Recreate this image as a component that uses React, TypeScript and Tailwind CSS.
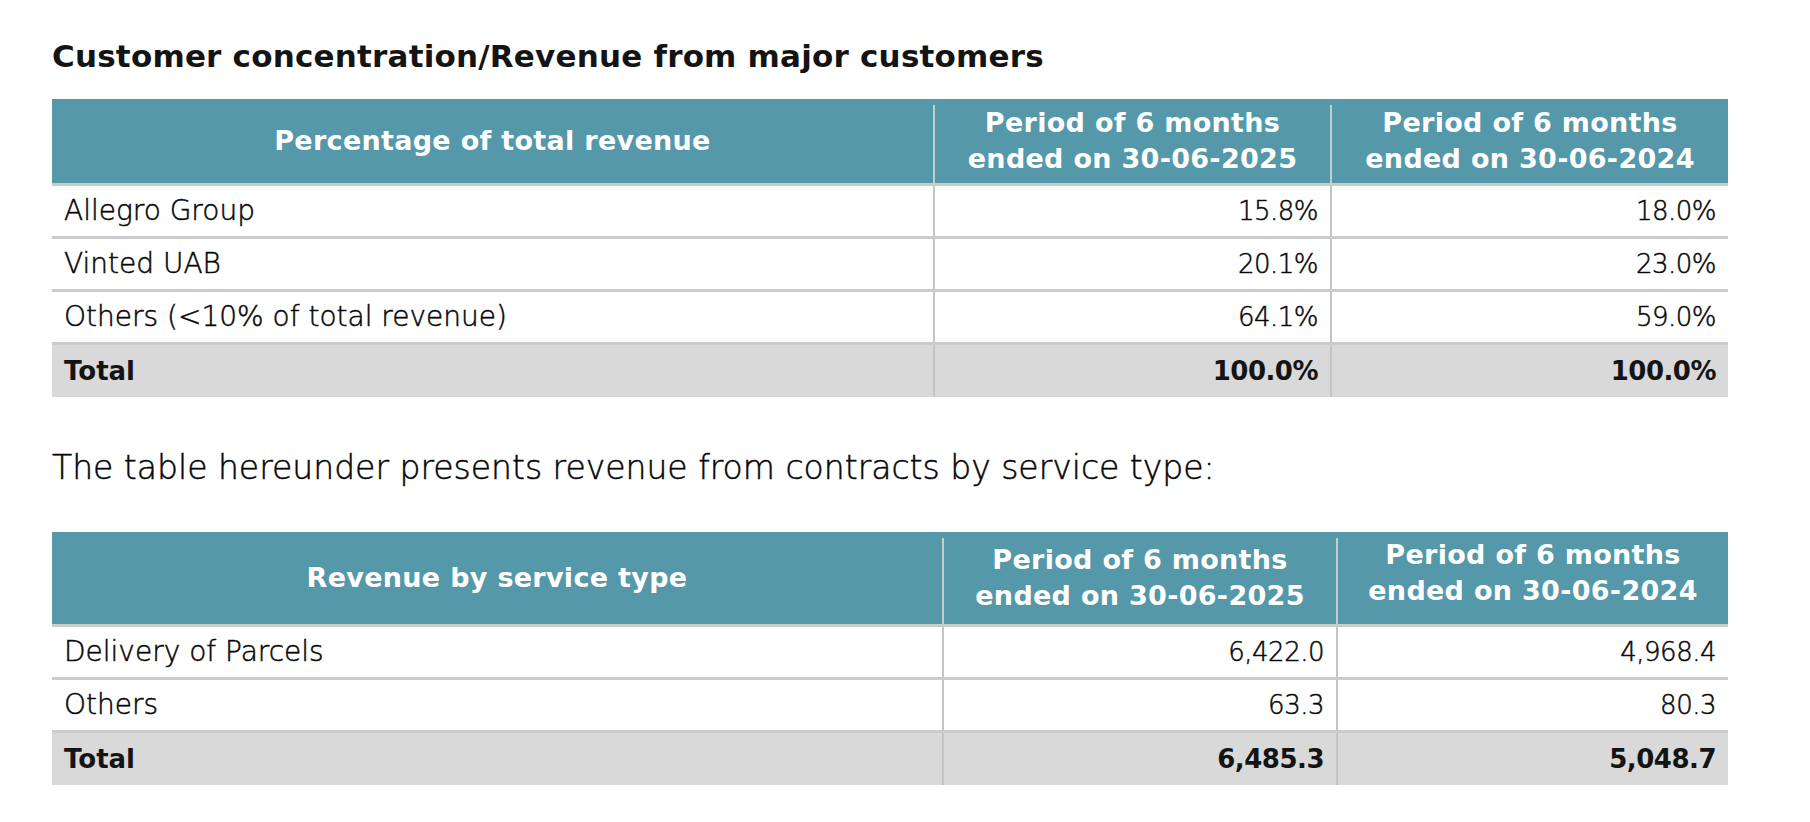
import React from 'react';

type Row = { label: string; a: string; b: string };

interface FinTableProps {
  heading: string;
  cols: string;
  headH: string;
  rows: Row[];
  total: Row;
  lift?: boolean;
}

const PeriodCell: React.FC<{ year: string; lift?: boolean }> = ({ year, lift }) => (
  <div className="flex h-full">
    <div className="w-[2px] mt-[6px] bg-[#c3ccd0]" />
    <div
      className={`flex-1 flex flex-col items-center justify-center text-white font-bold text-[27px] leading-[36px] tracking-[0.3px] ${
        lift ? 'pb-[10px]' : ''
      }`}
    >
      <span>Period of 6 months</span>
      <span>ended on 30-06-{year}</span>
    </div>
  </div>
);

const Cell: React.FC<{ children: React.ReactNode; num?: boolean }> = ({ children, num }) =>
  num ? (
    <div className="flex items-center justify-end px-[12px] border-l-2 border-[#c4c4c4] text-[26px] tracking-[-0.5px]">
      {children}
    </div>
  ) : (
    <div className="flex items-center px-[12px] text-[28px]">{children}</div>
  );

const FinTable: React.FC<FinTableProps> = ({ heading, cols, headH, rows, total, lift }) => {
  return (
    <div className="w-[1676px]">
      <div className={`grid ${cols} ${headH} bg-[#5598a9] border-b-[3px] border-[#c9cccd]`}>
        <div className="flex items-center justify-center text-white font-bold text-[27px] tracking-[0.3px]">
          {heading}
        </div>
        <PeriodCell year="2025" />
        <PeriodCell year="2024" lift={lift} />
      </div>
      {rows.map((r) => (
        <div
          key={r.label}
          className={`grid ${cols} h-[53px] border-b-[3px] border-[#cbcbcb] font-light text-black [-webkit-text-stroke:0.5px_#111]`}
        >
          <Cell>{r.label}</Cell>
          <Cell num>{r.a}</Cell>
          <Cell num>{r.b}</Cell>
        </div>
      ))}
      <div className={`grid ${cols} h-[52px] bg-[#d9d9d9] font-bold`}>
        <div className="flex items-center px-[12px] text-[26px]">{total.label}</div>
        <Cell num>{total.a}</Cell>
        <Cell num>{total.b}</Cell>
      </div>
    </div>
  );
};

export default function App() {
  return (
    <div className="w-[1810px] h-[822px] bg-white text-[#141414] font-['DejaVu_Sans',sans-serif] pl-[52px] pt-[37px]">
      <h2 className="font-bold text-[31px] leading-[38px] mb-[24px] tracking-[0.2px]">
        Customer concentration/Revenue from major customers
      </h2>
      <FinTable
        heading="Percentage of total revenue"
        cols="grid-cols-[881px_397px_398px]"
        headH="h-[87px]"
        rows={[
          { label: 'Allegro Group', a: '15.8%', b: '18.0%' },
          { label: 'Vinted UAB', a: '20.1%', b: '23.0%' },
          { label: 'Others (<10% of total revenue)', a: '64.1%', b: '59.0%' },
        ]}
        total={{ label: 'Total', a: '100.0%', b: '100.0%' }}
      />
      <p className="font-light text-[33px] leading-[40px] mt-[51px] mb-[44px] text-black [-webkit-text-stroke:0.5px_#111]">
        The table hereunder presents revenue from contracts by service type:
      </p>
      <FinTable
        heading="Revenue by service type"
        cols="grid-cols-[890px_394px_392px]"
        headH="h-[95px]"
        lift
        rows={[
          { label: 'Delivery of Parcels', a: '6,422.0', b: '4,968.4' },
          { label: 'Others', a: '63.3', b: '80.3' },
        ]}
        total={{ label: 'Total', a: '6,485.3', b: '5,048.7' }}
      />
    </div>
  );
}
